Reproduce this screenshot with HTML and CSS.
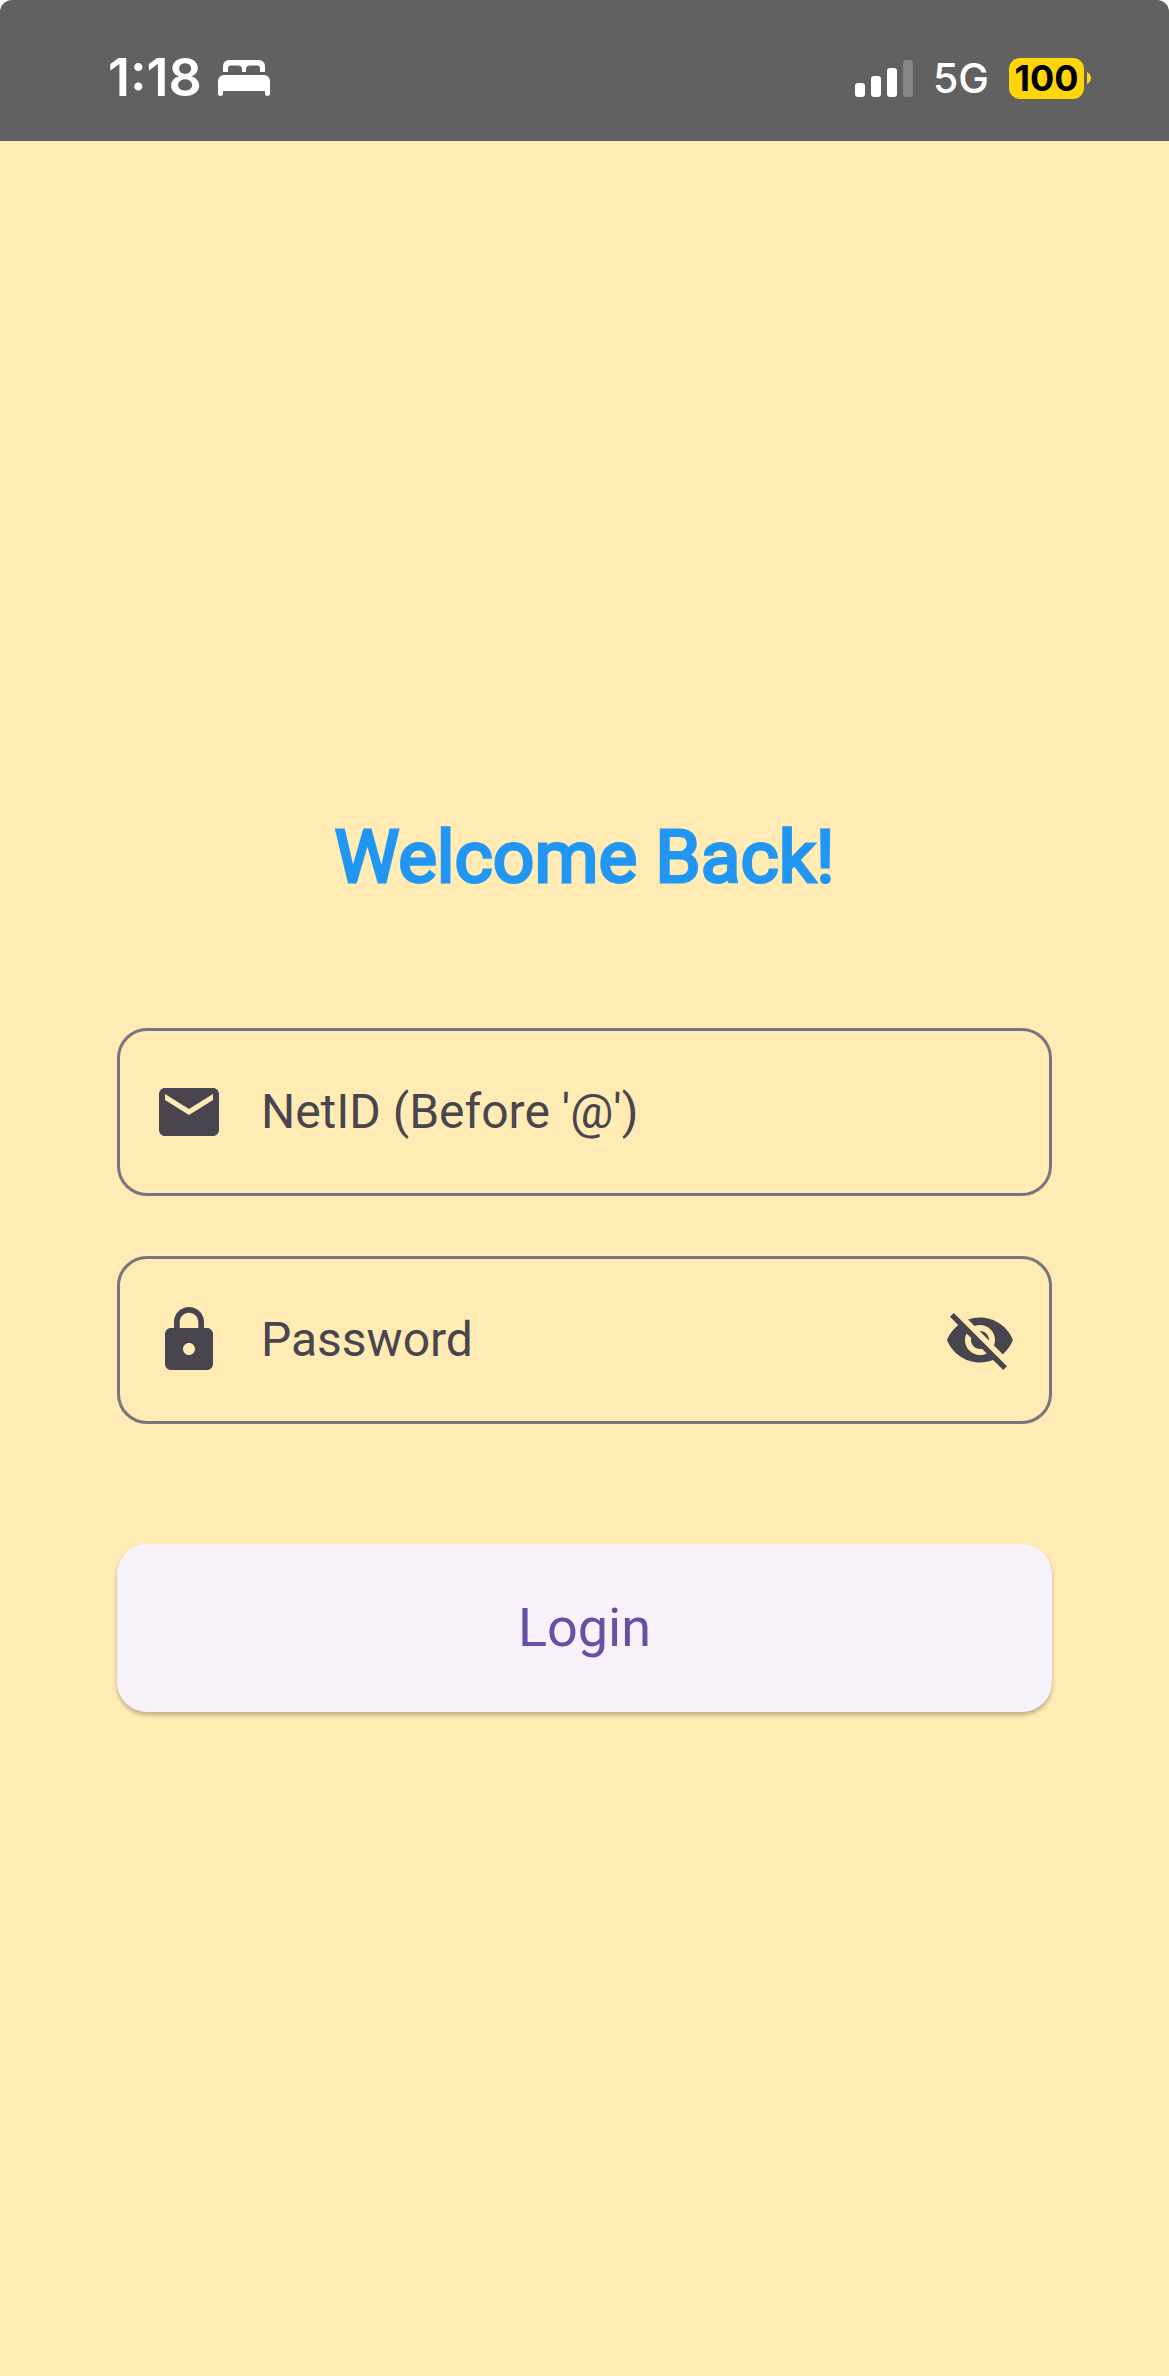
FILE: index.html
```html
<!DOCTYPE html>
<html lang="en">
<head>
  <meta charset="utf-8">
  <meta name="viewport" content="width=device-width, initial-scale=1">
  <title>Login</title>
  <link rel="stylesheet" href="styles.css">
</head>
<body>
  <div class="screen">
    <header class="status-bar">
      <div class="status-group status-left">
        <span class="time">1:18</span>
        <svg class="bed" viewBox="0 0 52 36" aria-hidden="true">
          <path d="M5 12V6a6 6 0 0 1 6-6h30a6 6 0 0 1 6 6v6h-5V8q0-2.500-3-2.500h-7Q28 5.500 28 9v3h-4V9q0-3.500-4-3.500h-7q-3 0-3 2.500v4z"/>
          <path d="M0 21a6 6 0 0 1 6-6h40a6 6 0 0 1 6 6v13q0 2-2.500 2T47 34v-3H5v3q0 2-2.500 2T0 34z"/>
        </svg>
      </div>
      <div class="status-group status-right">
        <svg class="signal" viewBox="0 0 58 37" aria-hidden="true">
          <rect x="0" y="23" width="10" height="14" rx="3"/>
          <rect x="16" y="16" width="10" height="21" rx="3"/>
          <rect x="32" y="8" width="10" height="29" rx="3"/>
          <rect class="signal-off" x="48" y="0" width="10" height="37" rx="3"/>
        </svg>
        <span class="network">5G</span>
        <div class="battery">
          <span class="battery-level">100</span>
          <svg class="battery-tip" viewBox="0 0 4 12" aria-hidden="true"><path d="M0 0q4 2 4 6T0 12z"/></svg>
        </div>
      </div>
    </header>

    <main class="content">
      <form class="login">
        <h1 class="title">Welcome Back!</h1>
        <div class="fields">
          <div class="field">
            <svg class="icon" viewBox="0 0 24 24" aria-hidden="true"><path d="M20 4H4c-1.100 0-1.990.9-1.990 2L2 18c0 1.100.9 2 2 2h16c1.100 0 2-.9 2-2V6c0-1.100-.9-2-2-2zm0 4l-8 5-8-5V6l8 5 8-5v2z"/></svg>
            <input class="field-input" type="text" aria-label="NetID (Before '@')" placeholder="NetID (Before '@')" autocomplete="username">
          </div>
          <div class="field">
            <svg class="icon" viewBox="0 0 24 24" aria-hidden="true"><path d="M18 8h-1V6c0-2.760-2.240-5-5-5S7 3.240 7 6v2H6c-1.100 0-2 .9-2 2v10c0 1.100.9 2 2 2h12c1.100 0 2-.9 2-2V10c0-1.100-.9-2-2-2zm-6 9c-1.100 0-2-.9-2-2s.9-2 2-2 2 .9 2 2-.9 2-2 2zm3.100-9H8.900V6c0-1.710 1.390-3.100 3.100-3.100 1.710 0 3.100 1.390 3.100 3.100v2z"/></svg>
            <input class="field-input" type="password" aria-label="Password" placeholder="Password" autocomplete="current-password">
            <button class="reveal" type="button" aria-label="Show password">
              <svg class="icon" viewBox="0 0 24 24" aria-hidden="true"><path d="M12 7c2.760 0 5 2.240 5 5 0 .65-.13 1.260-.36 1.830l2.920 2.920c1.510-1.260 2.700-2.890 3.430-4.750-1.730-4.390-6-7.500-11-7.500-1.400 0-2.740.25-3.980.7l2.160 2.160C10.740 7.130 11.350 7 12 7zM2 4.270l2.280 2.280.46.46C3.080 8.300 1.780 10.020 1 12c1.730 4.390 6 7.500 11 7.500 1.550 0 3.030-.3 4.380-.84l.42.42L19.730 22 21 20.730 3.270 3 2 4.270zM7.530 9.800l1.550 1.550c-.05.21-.08.43-.08.65 0 1.660 1.340 3 3 3 .22 0 .44-.03.65-.08l1.550 1.550c-.67.33-1.410.53-2.200.53-2.760 0-5-2.240-5-5 0-.79.2-1.530.53-2.200zm4.310-.78l3.150 3.150.02-.16c0-1.660-1.340-3-3-3l-.17.01z"/></svg>
            </button>
          </div>
        </div>
        <button class="submit" type="submit">Login</button>
      </form>
    </main>
  </div>
</body>
</html>
```
FILE: styles.css
```css
* {
  box-sizing: border-box;
}

body {
  margin: 0;
  background: #fff;
  font-family: Roboto, "Liberation Sans", sans-serif;
}

.screen {
  display: flex;
  flex-direction: column;
  min-height: 100vh;
  overflow: hidden;
  border-radius: 12px 12px 0 0;
  background: #ffebb3;
}

.status-bar {
  display: flex;
  justify-content: space-between;
  align-items: center;
  padding: 48px 78px 33px 108px;
  background: #616161;
  color: #fff;
  font-family: Inter, "Liberation Sans", sans-serif;
}

.status-group {
  display: flex;
  align-items: center;
  height: 60px;
}

.status-left {
  gap: 16px;
}

.status-right {
  gap: 20px;
}

.time {
  font-size: 52px;
  line-height: 60px;
  font-weight: 600;
}

.bed {
  width: 52px;
  height: 36px;
  fill: #fff;
}

.signal {
  width: 58px;
  height: 37px;
  fill: #fff;
}

.signal-off {
  fill: #868686;
}

.network {
  font-size: 41px;
  line-height: 60px;
  font-weight: 500;
}

.battery {
  display: flex;
  align-items: center;
  gap: 3px;
}

.battery-level {
  width: 75px;
  border-radius: 11px;
  background: #ffd60a;
  color: #000;
  font-size: 36px;
  line-height: 41px;
  font-weight: 700;
  text-align: center;
}

.battery-tip {
  width: 4px;
  height: 12px;
  fill: #ffd60a;
}

.content {
  display: flex;
  flex: 1;
  flex-direction: column;
  justify-content: center;
  padding: 48px 10%;
}

.login {
  display: flex;
  flex-direction: column;
  gap: 120px;
}

.title {
  margin: 0;
  color: #2196f3;
  font-size: 73px;
  line-height: 102px;
  font-weight: 400;
  -webkit-text-stroke: 3px #2196f3;
  text-align: center;
}

.fields {
  display: flex;
  flex-direction: column;
  gap: 60px;
}

.field {
  display: flex;
  align-items: center;
  gap: 36px;
  height: 168px;
  padding: 0 33px;
  border: 3px solid #79747e;
  border-radius: 30px;
}

.icon {
  display: block;
  flex: none;
  width: 72px;
  height: 72px;
  fill: #49454f;
}

.field-input {
  flex: 1;
  min-width: 0;
  height: 100%;
  padding: 0;
  border: 0;
  outline: 0;
  background: transparent;
  color: #1d1b20;
  font: inherit;
  font-size: 48px;
}

.field-input::placeholder {
  color: #49454f;
  opacity: 1;
}

.reveal {
  padding: 0;
  border: 0;
  background: transparent;
  cursor: pointer;
}

.submit {
  height: 168px;
  border: 0;
  border-radius: 30px;
  background: #f7f2fa;
  box-shadow: 0 3px 4px rgba(0, 0, 0, 0.26);
  color: #6750a4;
  font: inherit;
  font-size: 54px;
  cursor: pointer;
}
```
